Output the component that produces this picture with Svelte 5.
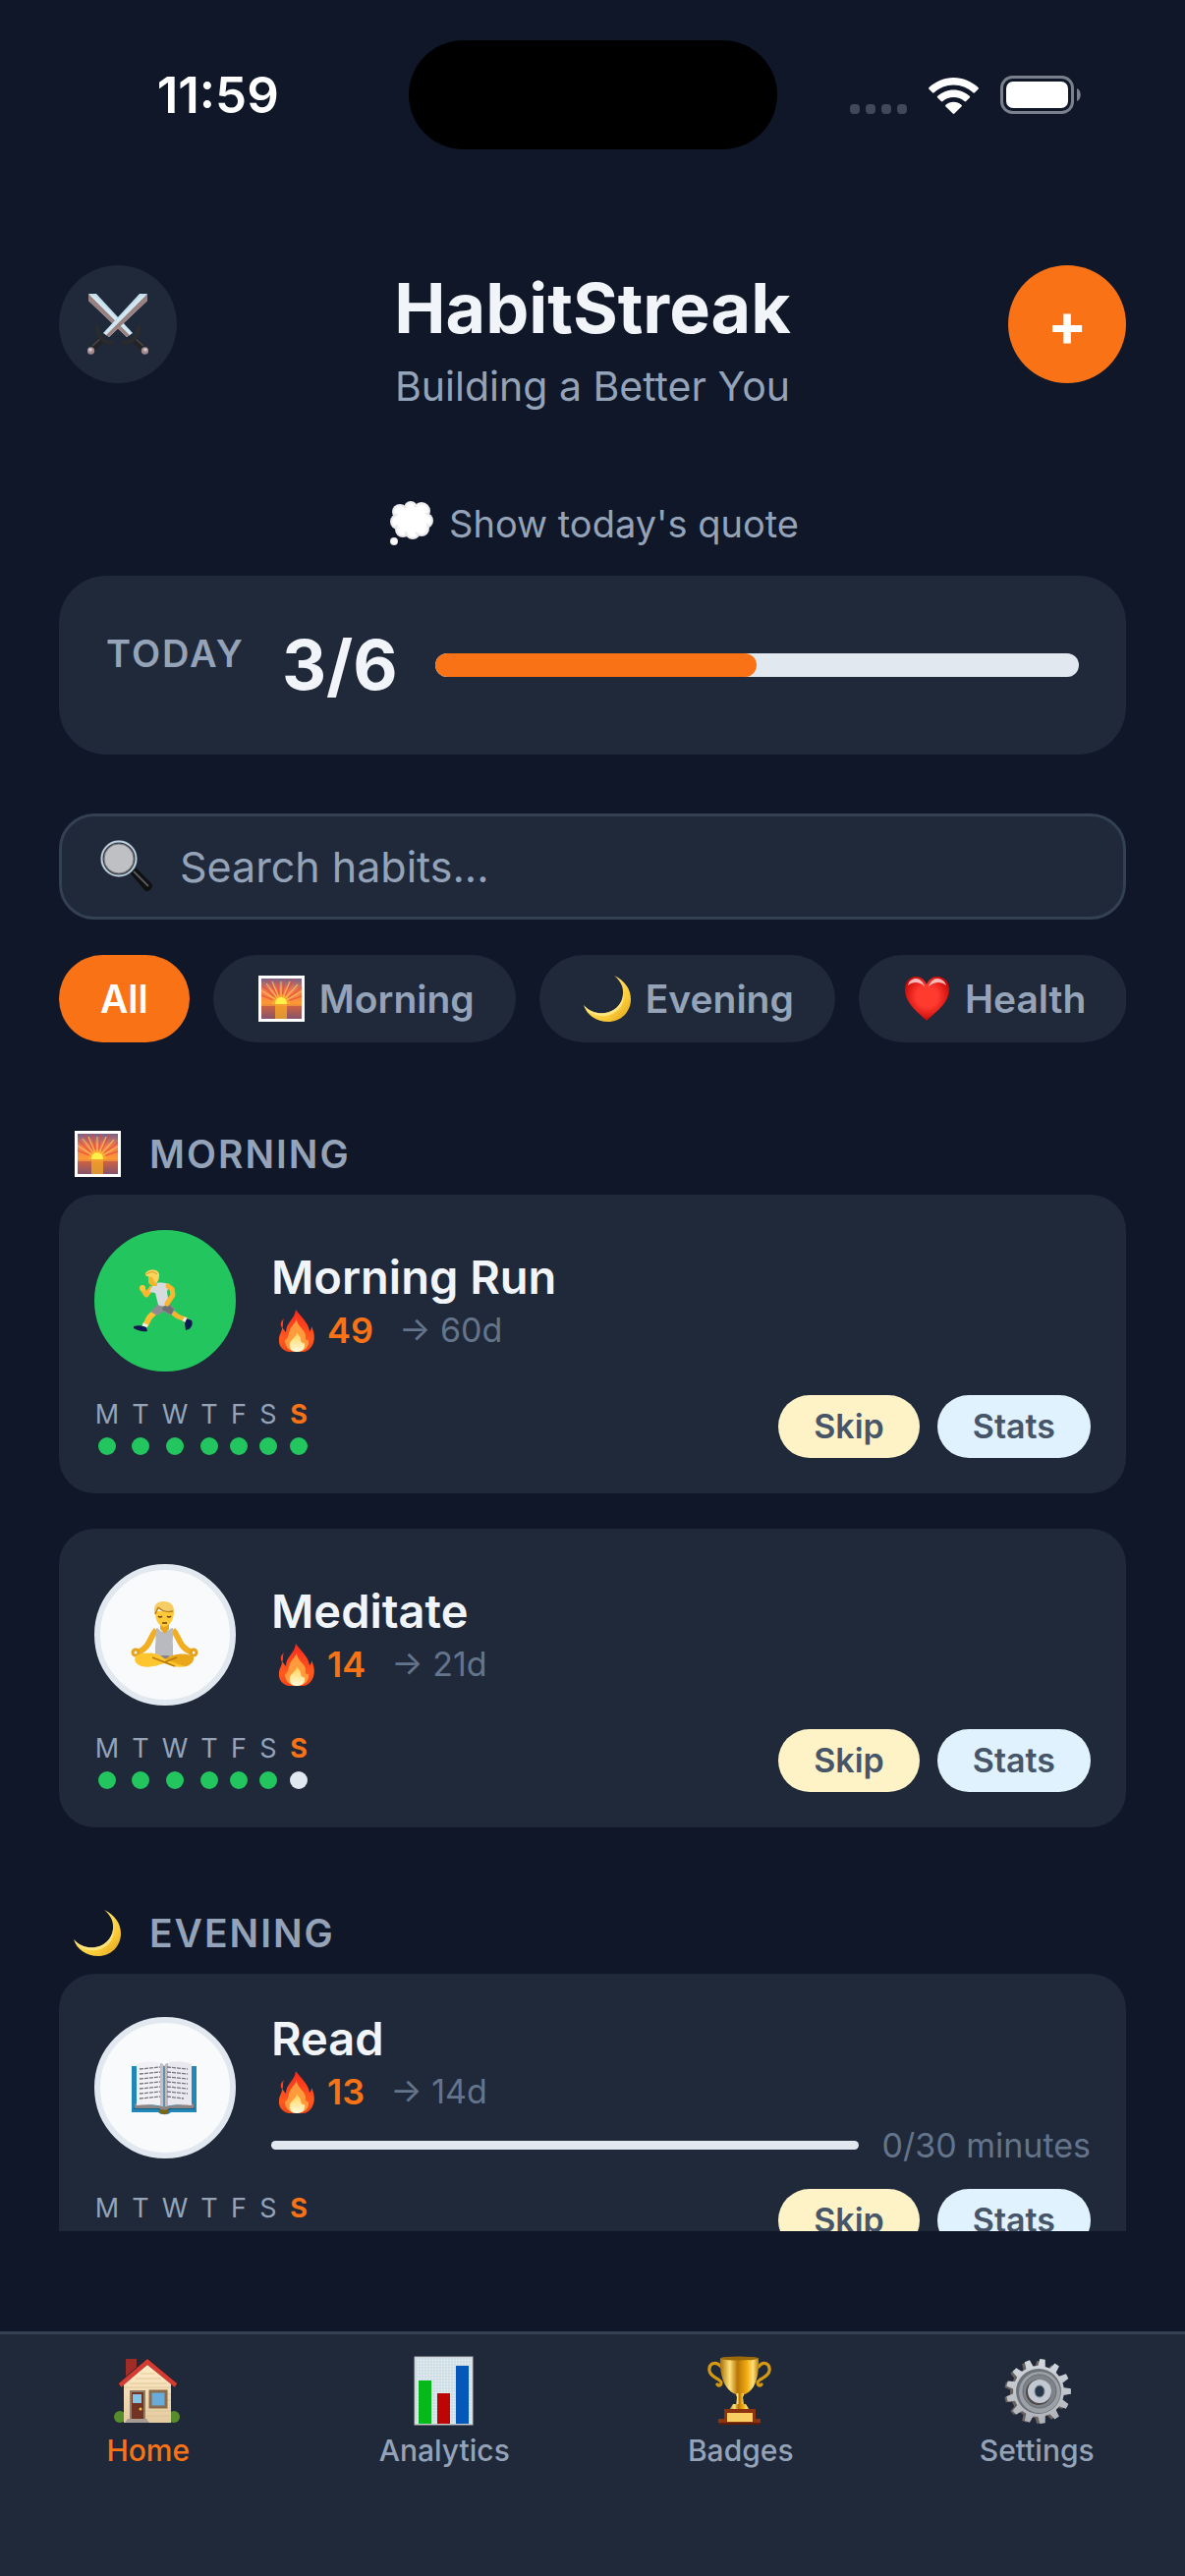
<script lang="ts">
  type Habit = {
    name: string;
    icon: string;
    group: string;
    streak: number;
    goal: number;
    done: boolean;
    week: number[];
    progress?: { value: number; target: number; unit: string };
  };

  const days = ['M', 'T', 'W', 'T', 'F', 'S', 'S'];
  const today = 6;

  const categories = [
    { name: 'All', icon: '' },
    { name: 'Morning', icon: 'sunrise' },
    { name: 'Evening', icon: 'moon' },
    { name: 'Health', icon: 'heart' },
  ];

  const tabs = [
    { name: 'Home', icon: 'house' },
    { name: 'Analytics', icon: 'chart' },
    { name: 'Badges', icon: 'trophy' },
    { name: 'Settings', icon: 'gear' },
  ];

  let habits = $state<Habit[]>([
    { name: 'Morning Run', icon: 'runner', group: 'Morning', streak: 49, goal: 60, done: true, week: [1, 1, 1, 1, 1, 1, 1] },
    { name: 'Meditate', icon: 'lotus', group: 'Morning', streak: 14, goal: 21, done: false, week: [1, 1, 1, 1, 1, 1, 0] },
    {
      name: 'Read', icon: 'book', group: 'Evening', streak: 13, goal: 14, done: false, week: [1, 1, 1, 1, 1, 1, 0],
      progress: { value: 0, target: 30, unit: 'minutes' },
    },
  ]);

  let category = $state('All');
  let tab = $state('Home');
  let query = $state('');

  const total = 6;
  const completed = 3;

  let sections = $derived(
    categories
      .filter((c) => c.icon && (category === 'All' || category === c.name))
      .map((c) => ({
        ...c,
        habits: habits.filter((h) => h.group === c.name && h.name.toLowerCase().includes(query.toLowerCase())),
      }))
      .filter((s) => s.habits.length > 0)
  );

  function toggle(habit: Habit) {
    habit.done = !habit.done;
    habit.week[today] = habit.done ? 1 : 0;
  }

  // outline of the cog, one tooth at a time
  function cog(cx: number, cy: number, inner: number, outer: number, teeth: number) {
    const points: string[] = [];
    const step = (Math.PI * 2) / teeth;
    for (let i = 0; i < teeth; i++) {
      const a = i * step - 1.45;
      const corners = [[-0.3, inner], [-0.17, outer], [0.17, outer], [0.3, inner]];
      for (const [offset, r] of corners) {
        points.push(`${(cx + r * Math.cos(a + offset * step)).toFixed(1)} ${(cy + r * Math.sin(a + offset * step)).toFixed(1)}`);
      }
    }
    return `M${points.join('L')}Z`;
  }
</script>

{#snippet sword()}
  <path d="M53 0h8v7L22 44l-6-4Z" fill="#c4dfec" />
  <path d="M61 0v7L22 44l-3-2Z" fill="#9a807e" />
  <path d="m55 2 4 0-40 40-2-2Z" fill="#d9edf7" opacity="0.7" />
  <path d="M16 45 6 55" stroke="#232325" stroke-width="7" />
  <path d="m14 45-9 8" stroke="#4b4b50" stroke-width="1.4" />
  <path d="M10 34c0 9 6 15 15 16" fill="none" stroke="#2a2b2d" stroke-width="4.4" stroke-linecap="round" />
  <circle cx="3.500" cy="58" r="3.700" fill="#a3888c" />
  <circle cx="3" cy="57" r="1.800" fill="#d3c8cf" />
{/snippet}

{#snippet icon(name: string)}
  {#if name === 'sunrise'}
    <svg class="emoji" viewBox="0 0 54 48" aria-hidden="true">
      <rect x="4" y="0" width="47" height="47" fill="#fff" />
      <rect x="7" y="3" width="41" height="41" fill="url(#sky)" />
      <g stroke="#e8453c" stroke-width="1.4" opacity="0.65">
        <path d="M27 28 7 20M27 28 8 10M27 28 14 3M27 28 22 3M27 28 31 3M27 28 40 3M27 28 48 12M27 28 48 21" />
      </g>
      <g stroke="#ffc45c" stroke-width="1.2" opacity="0.8">
        <path d="M27 28 7 15M27 28 18 6M27 28 27 6M27 28 36 6M27 28 48 16M27 28 12 8M27 28 44 9" />
      </g>
      <circle cx="27" cy="28" r="9" fill="#ffb52e" opacity="0.6" />
      <circle cx="27" cy="28" r="6" fill="#fff04a" />
      <rect x="7" y="29" width="41" height="15" fill="url(#sea)" />
      <rect x="21" y="29" width="12" height="15" fill="#ffb01f" opacity="0.7" />
      <path d="M7 29h41v2H7z" fill="#f7a13a" opacity="0.7" />
    </svg>
  {:else if name === 'moon'}
    <svg class="emoji" viewBox="0 0 54 48" aria-hidden="true">
      <path d="M34 0C45 5 51 14 51 24c0 13-10 23-23 23C16 47 6 40 3 30c6 7 14 9 22 8 12-2 19-12 18-22C43 10 39 4 34 0Z" fill="url(#moon)" />
      <path d="M3 30c6 7 14 9 22 8 12-2 19-12 18-22 3 13-5 23-17 25C16 42 8 38 3 30Z" fill="#fff0a0" opacity="0.7" />
    </svg>
  {:else if name === 'heart'}
    <svg class="emoji" viewBox="0 0 54 48" aria-hidden="true">
      <path d="M27 46C22 40 5 30 5 14 5 6 10 1 16 1c5 0 9 3 11 8 2-5 6-8 11-8 6 0 12 5 12 13C50 30 32 40 27 46Z" fill="url(#heart)" />
      <path d="M8 10c1-5 5-7 8-7 4 0 7 3 9 8-5-5-12-5-17-1ZM29 11c2-5 5-8 9-8 4 0 8 3 9 7-5-4-12-4-18 1Z" fill="#fff" opacity="0.7" />
    </svg>
  {:else if name === 'flame'}
    <svg class="flame" viewBox="-4 0 49 45" aria-hidden="true">
      <path d="M21 1c4 6 13 13 14 22 0 0 2-1 2-5 3 6 4 13 1 19-2 4-6 7-9 7H14C8 43 3 38 4 31c0-5 3-7 3-12l4 5C11 14 20 11 21 1Z" fill="url(#flame)" />
      <path d="M9 10c-4 4-4 6-2 10 2-3 0-6 2-10Z" fill="#ff3b1f" />
      <path d="M22 9c0 5-7 9-8 16-1 4-2 7-4 7 0 6 4 12 12 12s13-5 12-12c-2 1-4-1-3-4 0-7-10-10-9-19Z" fill="#ff9b3c" />
      <path d="M22 24c0 5-5 6-7 11-1 4 1 9 7 9s9-4 8-9c-2 1-4-1-4-4s-3-4-4-7Z" fill="url(#core)" />
    </svg>
  {:else if name === 'swords'}
    <svg class="swords" viewBox="0 0 62 62" aria-hidden="true">
      <g transform="matrix(-1 0 0 1 62 0)">{@render sword()}</g>
      {@render sword()}
    </svg>
  {:else if name === 'bubble'}
    <svg class="emoji" viewBox="0 0 54 48" aria-hidden="true">
      <g fill="url(#cloud)">
        <circle cx="25" cy="8" r="7" />
        <circle cx="14" cy="12" r="8" />
        <circle cx="36" cy="11" r="9" />
        <circle cx="12" cy="22" r="8" />
        <circle cx="40" cy="21" r="8" />
        <circle cx="17" cy="30" r="8" />
        <circle cx="27" cy="32" r="8" />
        <circle cx="36" cy="29" r="8" />
        <circle cx="8" cy="42" r="4" />
      </g>
      <ellipse cx="26" cy="20" rx="16" ry="13" fill="#fff" />
    </svg>
  {:else if name === 'magnifier'}
    <svg class="magnifier" viewBox="0 0 60 54" aria-hidden="true">
      <path d="m33 33 6-5 16 16c2 3 0 6-3 8h-3Z" fill="#0e1012" />
      <path d="m37 32 15 15" stroke="#55585c" stroke-width="2" />
      <path d="m32 32 6-5" stroke="#777b80" stroke-width="3" />
      <circle cx="22" cy="19" r="19" fill="#3c4045" />
      <circle cx="22" cy="19" r="17.500" fill="none" stroke="#b9cfdf" stroke-width="2" />
      <circle cx="22" cy="19" r="15" fill="#bfc0c4" stroke="#77797d" />
    </svg>
  {:else if name === 'runner'}
    <svg class="figure" viewBox="-3 -3 72 72" aria-hidden="true">
      <path d="m38 43 8 6 10 4" fill="none" stroke="#f5b52f" stroke-width="5" stroke-linejoin="round" />
      <path d="m53 56 2-5 5 2c2 4-1 8-3 9l-3 1Z" fill="#111a50" />
      <path d="m52 54 2-4" stroke="#eee" stroke-width="3" />
      <path d="m24 43-7 7-4 8" fill="none" stroke="#ffbf35" stroke-width="6" stroke-linejoin="round" />
      <path d="m10 57 5 2" stroke="#f2f2f2" stroke-width="3" />
      <path d="M1 59c4-1 8-1 13 1l1 4c-5 1-10-1-14-3Z" fill="#111a50" />
      <path d="m26 36 11-1c2 3 5 5 6 7l-4 6-8-4-6 4-7-4Z" fill="#8c8c91" />
      <path d="m31 39 6-2 5 5-3 5-9-5Z" fill="#6e6f74" />
      <path d="M20 19 14 27l-4-6" fill="none" stroke="#f9b62e" stroke-width="5" stroke-linejoin="round" />
      <circle cx="10" cy="20" r="3" fill="#ffc83d" />
      <path d="M21 16c6-2 12-2 16 1l-2 7 2 12c-4 3-9 3-11 1l-3-12-6-1Z" fill="#d9dadd" />
      <path d="m36 18 4 3 1 6-6 9" fill="none" stroke="#f9b62e" stroke-width="5" stroke-linejoin="round" stroke-linecap="round" />
      <path d="M16 7h9v11h-5l-4-3Z" fill="#f7b52f" />
      <path d="M13 6c0-5 13-7 14 0 0 5-1 8-4 9l-3-6-6-1Z" fill="#ffd45d" />
      <path d="M14 6c4-3 8-3 11 0" fill="none" stroke="#d99925" />
    </svg>
  {:else if name === 'lotus'}
    <svg class="figure" viewBox="0 0 72 72" aria-hidden="true">
      <path d="M27 31c-8 9-5 17-19 23M44 31c8 9 5 17 20 23" fill="none" stroke="#f0ae20" stroke-width="6" stroke-linejoin="round" />
      <circle cx="6" cy="54" r="3" fill="none" stroke="#e5a11b" stroke-width="3" />
      <circle cx="65" cy="54" r="3" fill="none" stroke="#e5a11b" stroke-width="3" />
      <path d="M27 29c3 0 3 4 8 4s5-4 9-4c1 6-1 12 0 18v11H26V47c1-6 0-12 1-18Z" fill="#b9babf" />
      <path d="M31 24h9v6l-4 5-5-5Z" fill="#e9a61d" />
      <path d="M31 57h9v8h-9Z" fill="#84868c" />
      <path d="M35 62c6-7 20-8 29-5 3 3 0 9-6 11-7 1-16-1-23-6Z" fill="#eba71a" />
      <path d="M35 60C29 54 16 53 7 57c-4 4-1 9 5 11 9 2 16-1 23-3 8 3 14 5 22 3-6-1-13-4-22-8Z" fill="#ffc52f" />
      <path d="m23 59 23 9M48 59 35 64" fill="none" stroke="#b97a0c" stroke-width="1.4" />
      <path d="M26 12c0 8 2 14 9 16 7-2 10-8 10-16Z" fill="#ffca3a" />
      <path d="M25 14C24 4 29 2 35 2s11 3 10 13l-1-3c-5 0-11-1-14-4l-4 7Z" fill="#f6cd62" />
      <path d="M29 8c4 4 10 5 15 4M29 8l-3 7" fill="none" stroke="#b97f17" stroke-width="1.5" />
      <path d="M29 17q2 2 4 0M38 17q2 2 4 0M33 24h5" fill="none" stroke="#6b430d" stroke-width="1.6" />
    </svg>
  {:else if name === 'book'}
    <svg class="figure" viewBox="0 0 72 72" aria-hidden="true">
      <path d="M2 14h66v47H42c-3 3-10 3-13 0H2Z" fill="#2186b8" />
      <path d="M4 57h25c4 2 9 2 13 0h24" fill="none" stroke="#135f88" stroke-width="2" />
      <ellipse cx="35" cy="60" rx="5" ry="3" fill="#7c6517" />
      <path d="M5 52 35 55l30-3v5H40c-2 2-8 2-10 0H5Z" fill="#8c8583" />
      <path d="M7 12c9-3 20-4 27 0v43c-8-2-18-2-27-1Z" fill="#f1f0f4" />
      <path d="M36 12c8-4 19-3 27 0v42c-9-1-19-1-27 1Z" fill="#e9e8ee" />
      <path d="M31 11q3 0 4 3 1-3 4-3v43q-3 0-4 3-1-3-4-3Z" fill="#9a989e" opacity="0.55" />
      <g stroke="#77757d" stroke-width="1.3" stroke-dasharray="4 1">
        <path d="m10 17 21-2M10 22l21-2M10 27l21-2M10 32l21-2M10 37l21-2M10 42l21-2M10 47l21-2" />
        <path d="m38 15 21 2M38 20l21 2M38 25l21 2M38 30l21 2M38 35l21 2M38 40l21 2M38 45l17 2" />
      </g>
    </svg>
  {:else if name === 'house'}
    <svg class="figure" viewBox="0 0 72 72" aria-hidden="true">
      <circle cx="7" cy="63" r="6" fill="#568c2b" />
      <circle cx="62" cy="63" r="6" fill="#568c2b" />
      <rect x="13" y="4" width="11" height="20" fill="#9e2d27" />
      <path d="M11 29 35 10l24 19v40H11Z" fill="url(#wall)" />
      <g stroke="#dcc091" stroke-width="0.8">
        <path d="M28 19h15M23 24h26M17 29h38M11 33h48M54 40h5M54 46h5M34 57h25M34 62h25" />
      </g>
      <path d="m5 31 30-26 31 26" fill="none" stroke="#231f24" stroke-width="3" />
      <path d="m7 31 28-24 29 24" fill="none" stroke="#d43b33" stroke-width="4.5" />
      <path d="M17 36h16v30H17Z" fill="#8f7b66" />
      <path d="M19 38h12v27H19Z" fill="#713323" />
      <rect x="20" y="40" width="9" height="9" fill="#82c5e8" />
      <circle cx="28" cy="55" r="1.5" fill="#f5bd46" />
      <rect x="38" y="37" width="16" height="16" fill="#69acd9" stroke="#8a6b4b" stroke-width="3" />
      <path d="M15 65h19l3 4H12Z" fill="#a69c93" />
    </svg>
  {:else if name === 'chart'}
    <svg class="figure" viewBox="0 0 72 72" aria-hidden="true">
      <rect x="6" y="2" width="59" height="69" fill="#e9eef0" />
      <g stroke="#bcd3e0" stroke-width="0.7">
        {#each Array(19) as _, i}
          <path d="M{8 + i * 3} 3v67" />
        {/each}
        {#each Array(23) as _, i}
          <path d="M7 {4 + i * 3}h57" />
        {/each}
      </g>
      <rect x="6" y="2" width="59" height="69" fill="none" stroke="#b4b8ba" />
      <rect x="10" y="26" width="13" height="44" fill="#05b91b" />
      <rect x="29" y="39" width="13" height="31" fill="#bd0505" />
      <rect x="48" y="11" width="13" height="59" fill="#0458b9" />
    </svg>
  {:else if name === 'trophy'}
    <svg class="figure" viewBox="0 0 72 72" aria-hidden="true">
      <path d="M16 12C10 5 3 9 4 16c1 7 11 8 12 12 0 3-2 4-4 2M54 12c5-7 12-3 11 4-1 7-11 8-12 12 0 3 2 4 4 2" fill="none" stroke="#d59a12" stroke-width="3.2" stroke-linecap="round" />
      <path d="M15 3h39c1 17-3 33-14 37h-9C19 36 14 20 15 3Z" fill="url(#gold)" />
      <ellipse cx="34.5" cy="3.5" rx="19.5" ry="2" fill="#9c6a08" />
      <path d="M30 39h10l-2 4 1 8h-8l1-8Z" fill="url(#gold)" />
      <path d="M28 50h13l4 6H24Z" fill="url(#gold)" />
      <path d="M19 55h32v10h5v6H13v-6h6Z" fill="#8c3410" />
      <path d="M13 69h43v2H13Z" fill="#5b1c08" />
      <rect x="22" y="59" width="26" height="9" fill="#f7cf62" />
    </svg>
  {:else if name === 'gear'}
    <svg class="figure" viewBox="0 0 72 72" aria-hidden="true">
      <path d={cog(35, 38, 26, 32, 13)} fill="#69625f" />
      <path d={cog(38, 37, 26, 33, 13)} fill="url(#steel)" />
      <circle cx="38" cy="37" r="23" fill="#6d7279" />
      <circle cx="39" cy="38" r="21" fill="#9ca1a8" />
      <circle cx="39" cy="37" r="17" fill="#7e838a" stroke="#686d73" />
      <circle cx="38" cy="38" r="13" fill="#4f4a4a" />
      <circle cx="39" cy="37" r="12" fill="#c3c9d2" />
      <ellipse cx="39" cy="37" rx="5" ry="6" fill="#28384c" stroke="#80868d" />
    </svg>
  {/if}
{/snippet}

<div class="app">
  <svg class="defs" aria-hidden="true">
    <defs>
      <linearGradient id="sky" x2="0" y2="1">
        <stop offset="0" stop-color="#75618a" />
        <stop offset="0.3" stop-color="#f07a4e" />
        <stop offset="0.65" stop-color="#ff9b32" />
      </linearGradient>
      <linearGradient id="sea" x2="0" y2="1">
        <stop offset="0" stop-color="#d9643c" />
        <stop offset="1" stop-color="#85536a" />
      </linearGradient>
      <linearGradient id="moon" x2="1" y2="1">
        <stop offset="0.3" stop-color="#ffe46c" />
        <stop offset="0.7" stop-color="#fccb36" />
        <stop offset="1" stop-color="#d99d1c" />
      </linearGradient>
      <radialGradient id="heart" cx="0.5" cy="0.45" r="0.6">
        <stop offset="0.4" stop-color="#ff3b30" />
        <stop offset="1" stop-color="#c00000" />
      </radialGradient>
      <linearGradient id="flame" x2="0" y2="1">
        <stop offset="0" stop-color="#f9281b" />
        <stop offset="0.7" stop-color="#ff5a1f" />
        <stop offset="1" stop-color="#f0441a" />
      </linearGradient>
      <linearGradient id="core" x2="0" y2="1">
        <stop offset="0" stop-color="#ffd24d" />
        <stop offset="1" stop-color="#fffbe0" />
      </linearGradient>
      <radialGradient id="cloud">
        <stop offset="0.6" stop-color="#fff" />
        <stop offset="1" stop-color="#dedee0" />
      </radialGradient>
      <linearGradient id="wall" x2="0" y2="1">
        <stop offset="0" stop-color="#ffedc8" />
        <stop offset="1" stop-color="#e3caa0" />
      </linearGradient>
      <linearGradient id="gold">
        <stop offset="0" stop-color="#a86d05" />
        <stop offset="0.25" stop-color="#ffe27a" />
        <stop offset="0.45" stop-color="#b97505" />
        <stop offset="0.7" stop-color="#f2ae13" />
        <stop offset="0.85" stop-color="#ffe07a" />
        <stop offset="1" stop-color="#b87b08" />
      </linearGradient>
      <linearGradient id="steel" x2="0" y2="1">
        <stop offset="0" stop-color="#d3d9e0" />
        <stop offset="1" stop-color="#aeb0b7" />
      </linearGradient>
    </defs>
  </svg>

  <div class="status">
    <span class="time">11:59</span>
    <span class="island"></span>
    <span class="signals">
      <svg class="dots" viewBox="0 0 58 10" aria-hidden="true">
        {#each [0, 16, 32, 48] as x}
          <rect {x} width="10" height="10" rx="4" fill="#414858" />
        {/each}
      </svg>
      <svg class="wifi" viewBox="0 0 51 37" aria-hidden="true" fill="#fff">
        <path d="M25.500 0C35 0 44 4 50.500 10c.6.600.6 1.200 0 1.800l-3.500 3.500c-.5.500-1.200.5-1.700 0C40 10.500 33 7.500 25.500 7.500S11 10.500 5.700 15.300c-.5.5-1.200.5-1.700 0L.5 11.800c-.6-.6-.6-1.200 0-1.800C7 4 16 0 25.500 0Z" />
        <path d="M25.500 12.500c6.500 0 12 2.500 16.300 6.300.6.500.6 1.200 0 1.800l-3.600 3.500c-.5.500-1.100.5-1.700 0-3-2.600-6.800-4.100-11-4.100s-8 1.500-11 4.100c-.6.5-1.200.5-1.700 0l-3.600-3.500c-.6-.6-.6-1.300 0-1.800 4.300-3.800 9.800-6.300 16.300-6.300Z" />
        <path d="M25.500 24.800c3 0 5.800 1.100 8 3 .5.500.5 1.200 0 1.700l-7.100 7c-.5.600-1.300.6-1.800 0l-7.100-7c-.5-.5-.5-1.200 0-1.700 2.200-1.900 5-3 8-3Z" />
      </svg>
      <svg class="battery" viewBox="0 0 82 39" aria-hidden="true">
        <rect x="1.500" y="1.500" width="72" height="36" rx="11" fill="none" stroke="#7b818c" stroke-width="3" />
        <rect x="6" y="6" width="63" height="27" rx="7" fill="#fff" />
        <path d="M78 13c5 2 5 11 0 13Z" fill="#7b818c" />
      </svg>
    </span>
  </div>

  <header>
    <button class="round" aria-label="Challenges">{@render icon('swords')}</button>
    <div class="heading">
      <h1>HabitStreak</h1>
      <p>Building a Better You</p>
    </div>
    <button class="round add" aria-label="Add habit">+</button>
  </header>

  <button class="quote">{@render icon('bubble')}Show today's quote</button>

  <section class="summary">
    <span class="label">TODAY</span>
    <strong>{completed}/{total}</strong>
    <div class="bar" role="progressbar" aria-label="Completed today" aria-valuenow={completed} aria-valuemax={total}>
      <div class="fill" style="width: {(completed / total) * 100}%"></div>
    </div>
  </section>

  <label class="search">
    {@render icon('magnifier')}
    <input type="text" placeholder="Search habits..." aria-label="Search habits" bind:value={query} />
  </label>

  <div class="chips">
    {#each categories as c}
      <button class:active={category === c.name} onclick={() => (category = c.name)}>
        {#if c.icon}{@render icon(c.icon)}{/if}{c.name}
      </button>
    {/each}
  </div>

  <main>
    {#each sections as section}
      <h2>{@render icon(section.icon)}{section.name.toUpperCase()}</h2>
      <div class="cards">
        {#each section.habits as habit}
          <article>
            <div class="top">
              <button class="check" class:done={habit.done} aria-label="Complete {habit.name}" onclick={() => toggle(habit)}>
                {@render icon(habit.icon)}
              </button>
              <div class="info">
                <h3>{habit.name}</h3>
                <div class="meta">
                  {@render icon('flame')}
                  <span class="streak">{habit.streak}</span>
                  <span class="goal">→ {habit.goal}d</span>
                </div>
                {#if habit.progress}
                  <div class="progress">
                    <div class="track">
                      <div class="fill" style="width: {(habit.progress.value / habit.progress.target) * 100}%"></div>
                    </div>
                    <span>{habit.progress.value}/{habit.progress.target} {habit.progress.unit}</span>
                  </div>
                {/if}
              </div>
            </div>
            <div class="bottom">
              <div class="week">
                {#each days as day, i}
                  <div class="day" class:today={i === today}>
                    <span>{day}</span>
                    <i class:on={habit.week[i]}></i>
                  </div>
                {/each}
              </div>
              <div class="actions">
                <button class="skip">Skip</button>
                <button class="stats">Stats</button>
              </div>
            </div>
          </article>
        {/each}
      </div>
    {/each}
  </main>

  <nav>
    {#each tabs as t}
      <button class:active={tab === t.name} onclick={() => (tab = t.name)}>
        {@render icon(t.icon)}
        {t.name}
      </button>
    {/each}
  </nav>
</div>

<style>
  :global(body) { background: #0f1729; }
  .app {
    display: flex;
    flex-direction: column;
    height: 100vh;
    background: #0f1729;
    color: #f1f5f9;
    font-family: Inter, "Liberation Sans", sans-serif;
  }
  button {
    border: 0;
    padding: 0;
    background: none;
    color: inherit;
    font: inherit;
    cursor: pointer;
  }
  h1, h2, h3, p { margin: 0; }
  svg { display: block; flex: none; }
  .defs { width: 0; height: 0; }
  .emoji { width: 54px; height: 48px; }
  .figure { width: 72px; height: 72px; }
  .flame { width: 49px; height: 45px; }
  .swords { width: 62px; height: 62px; }
  .magnifier { width: 60px; height: 54px; }

  .status {
    display: grid;
    grid-template-columns: 1fr 375px 1fr;
    align-items: center;
    flex: none;
    height: 111px;
    padding: 41px 0 118px;
  }
  .time {
    padding-left: 28px;
    text-align: center;
    font-size: 51px;
    font-weight: 600;
    color: #fff;
  }
  .island {
    height: 111px;
    border-radius: 56px;
    background: #000;
  }
  .signals {
    display: flex;
    align-items: flex-end;
    justify-content: flex-end;
    gap: 22px;
    padding-right: 106px;
  }
  .dots { width: 58px; height: 10px; }
  .wifi { width: 51px; height: 37px; }
  .battery { width: 82px; height: 39px; }

  header {
    display: flex;
    justify-content: space-between;
    flex: none;
    padding: 0 60px;
  }
  .round {
    display: grid;
    place-items: center;
    width: 120px;
    height: 120px;
    border-radius: 50%;
    background: #1f293a;
  }
  .add {
    background: #f97316;
    color: #fff;
    font-size: 60px;
    font-weight: 700;
  }
  .heading { text-align: center; }
  h1 {
    font-size: 70px;
    line-height: 88px;
    font-weight: 700;
  }
  .heading p {
    margin-top: 8px;
    font-size: 41px;
    line-height: 54px;
    color: #94a3b8;
  }
  .quote {
    display: flex;
    align-items: center;
    align-self: center;
    gap: 10px;
    margin: 86px 0 26px;
    font-size: 38px;
    line-height: 54px;
    color: #94a3b8;
  }

  .summary {
    display: flex;
    align-items: center;
    flex: none;
    gap: 38px;
    margin: 0 60px;
    padding: 48px;
    border-radius: 48px;
    background: #1f293a;
  }
  .label {
    align-self: flex-start;
    font-size: 38px;
    line-height: 62px;
    font-weight: 600;
    letter-spacing: 2px;
    color: #94a3b8;
  }
  strong {
    font-size: 70px;
    line-height: 86px;
    font-weight: 700;
  }
  .bar {
    flex: 1;
    height: 24px;
    border-radius: 12px;
    background: #e2e8f0;
    overflow: hidden;
  }
  .fill {
    height: 100%;
    border-radius: 12px;
    background: #f97316;
  }

  .search {
    display: flex;
    align-items: center;
    flex: none;
    gap: 24px;
    margin: 60px 60px 36px;
    padding: 0 36px;
    border: 3px solid #334152;
    border-radius: 36px;
    background: #1f293a;
  }
  input {
    flex: 1;
    min-width: 0;
    height: 102px;
    padding: 0;
    border: 0;
    outline: 0;
    background: none;
    color: #f1f5f9;
    font: inherit;
    font-size: 43px;
  }
  input::placeholder { color: #94a3b8; opacity: 1; }

  .chips {
    display: flex;
    flex: none;
    gap: 24px;
    margin: 0 60px;
    overflow-x: auto;
    scrollbar-width: none;
  }
  .chips button {
    display: flex;
    align-items: center;
    flex: none;
    gap: 12px;
    height: 89px;
    padding: 0 42px;
    border-radius: 48px;
    background: #1f293a;
    color: #94a3b8;
    font-size: 39px;
    font-weight: 600;
  }
  .chips .active {
    background: #f97316;
    color: #fff;
  }

  main {
    flex: 1;
    min-height: 0;
    margin: 30px 60px 102px;
    overflow-y: auto;
    scrollbar-width: none;
  }
  h2 {
    display: flex;
    align-items: center;
    gap: 26px;
    padding: 60px 12px 17px;
    font-size: 39px;
    line-height: 48px;
    font-weight: 600;
    letter-spacing: 2px;
    color: #94a3b8;
  }
  .cards {
    display: flex;
    flex-direction: column;
    gap: 36px;
    margin-bottom: 24px;
  }
  article {
    padding: 36px;
    border-radius: 36px;
    background: #1f293a;
  }
  .top {
    display: flex;
    align-items: center;
    gap: 36px;
    margin-bottom: 24px;
  }
  .check {
    display: grid;
    place-items: center;
    flex: none;
    box-sizing: border-box;
    width: 144px;
    height: 144px;
    border: 6px solid #e2e8f0;
    border-radius: 50%;
    background: #f8fafc;
  }
  .check.done {
    border-color: #22c55e;
    background: #22c55e;
  }
  .info { flex: 1; }
  h3 {
    font-size: 47px;
    line-height: 60px;
    font-weight: 600;
  }
  .meta {
    display: flex;
    align-items: center;
    gap: 8px;
    line-height: 48px;
  }
  .streak {
    font-size: 36px;
    font-weight: 600;
    color: #f97316;
  }
  .goal {
    margin-left: 18px;
    font-size: 34px;
    color: #64748b;
  }
  .progress {
    display: flex;
    align-items: center;
    gap: 24px;
    margin-top: 10px;
    font-size: 34px;
    line-height: 41px;
    color: #64748b;
  }
  .track {
    flex: 1;
    height: 9px;
    border-radius: 5px;
    background: #e2e8f0;
    overflow: hidden;
  }
  .bottom {
    display: flex;
    align-items: center;
    justify-content: space-between;
  }
  .week {
    display: grid;
    grid-template-columns: 26px 18px 28px 18px 18px 18px 20px;
    gap: 12px;
  }
  .day {
    display: flex;
    flex-direction: column;
    align-items: center;
    gap: 6px;
    font-size: 27px;
    line-height: 34px;
    color: #94a3b8;
  }
  .today { color: #f97316; font-weight: 700; }
  .day i {
    width: 18px;
    height: 18px;
    border-radius: 50%;
    background: #e2e8f0;
  }
  .day .on { background: #22c55e; }
  .actions { display: flex; gap: 18px; }
  .actions button {
    padding: 0 36px;
    border-radius: 32px;
    font-size: 34px;
    line-height: 64px;
    font-weight: 600;
    color: #475569;
  }
  .actions .skip { background: #fef3c7; }
  .actions .stats { background: #e0f2fe; }

  nav {
    display: grid;
    grid-template-columns: repeat(4, 1fr);
    flex: none;
    padding: 21px 0 108px;
    border-top: 3px solid #334152;
    background: #1f293a;
  }
  nav button {
    display: flex;
    flex-direction: column;
    align-items: center;
    gap: 6px;
    font-size: 30px;
    line-height: 39px;
    font-weight: 500;
    color: #94a3b8;
  }
  nav .active { color: #f97316; }
</style>
